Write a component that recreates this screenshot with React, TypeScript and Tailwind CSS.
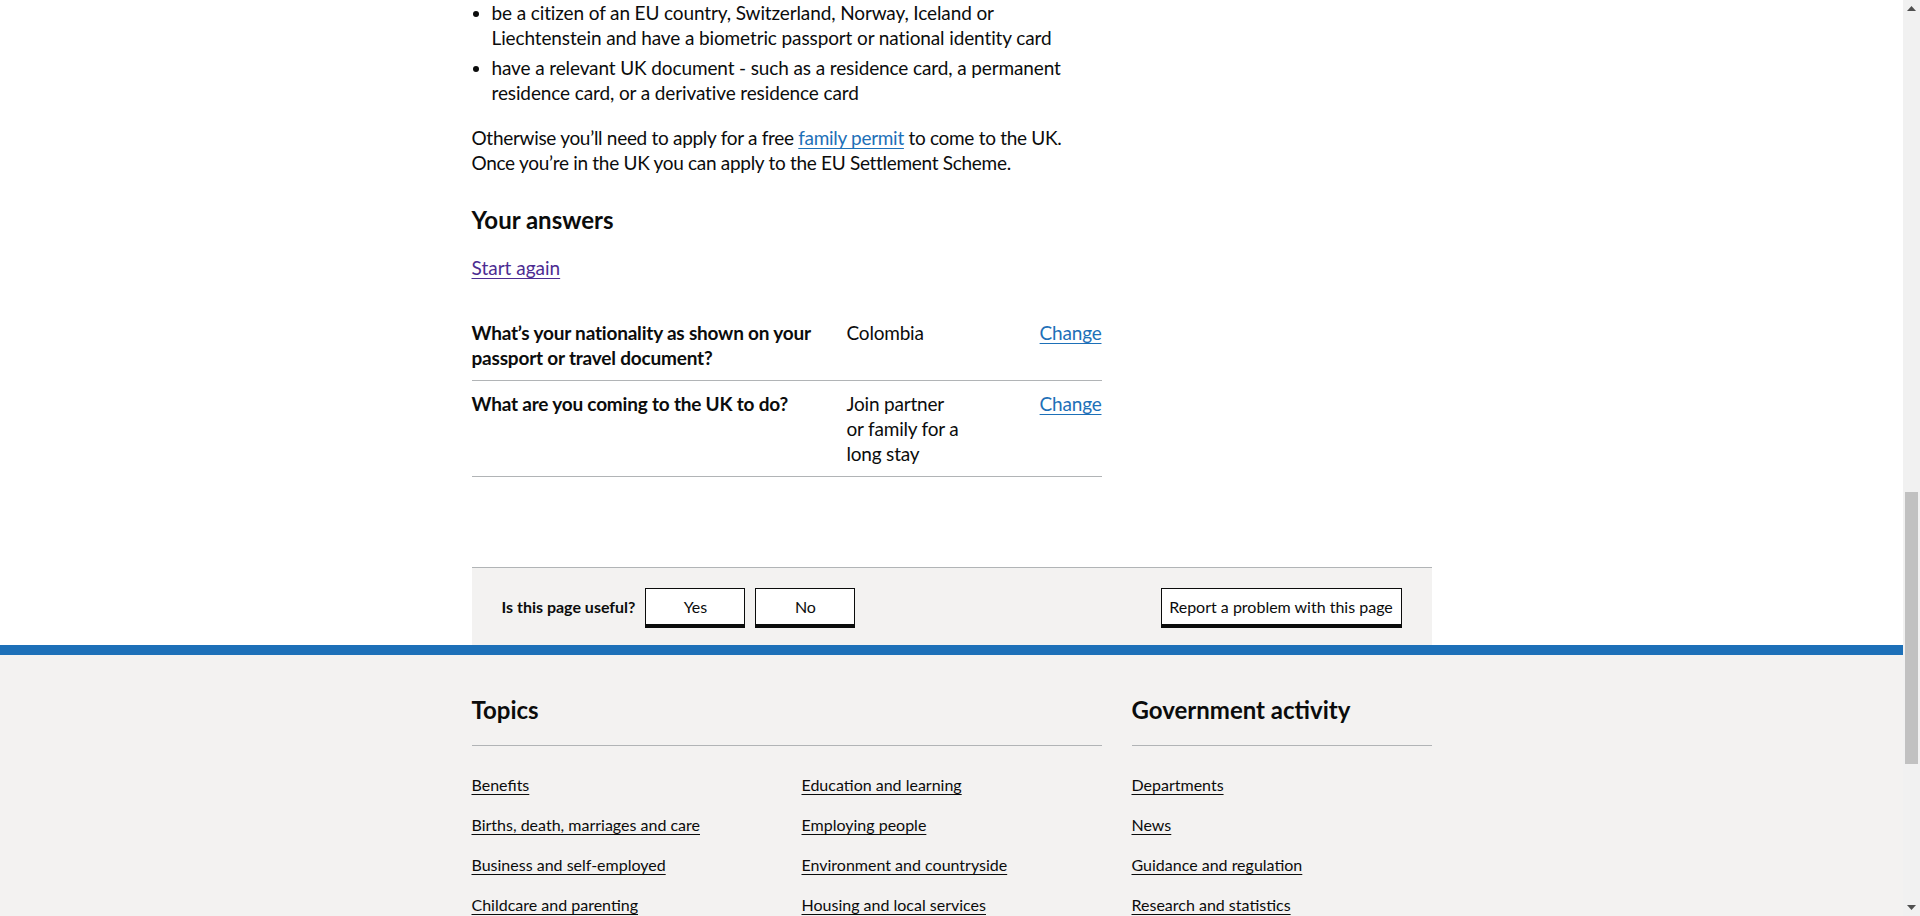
import { ReactNode } from "react";

const font = { fontFamily: "Lato, 'Liberation Sans', sans-serif" };

function TopicLink({ children }: { children: ReactNode }) {
  return (
    <li className="mb-[15px] leading-[25px]">
      <a href="#" className="text-[16px] text-[#0b0c0c] underline decoration-1 underline-offset-[3px]">
        {children}
      </a>
    </li>
  );
}

function FeedbackButton({ text, width }: { text: string; width: string }) {
  return (
    <button
      className={`${width} h-[37px] border border-[#0b0c0c] bg-white text-[16px] text-[#0b0c0c] shadow-[0_3px_0_#0b0c0c]`}
    >
      {text}
    </button>
  );
}

function Scrollbar() {
  return (
    <div className="flex w-[17px] shrink-0 flex-col bg-[#f1f1f1]">
      <div className="flex h-[17px] items-center justify-center">
        <svg width="9" height="5" viewBox="0 0 9 5">
          <path d="M0 5 L4.5 0 L9 5 Z" fill="#505050" />
        </svg>
      </div>
      <div className="flex-1">
        <div className="mx-auto mt-[475px] h-[272px] w-[13px] bg-[#c1c1c1]" />
      </div>
      <div className="flex h-[17px] items-center justify-center">
        <svg width="9" height="5" viewBox="0 0 9 5">
          <path d="M0 0 L9 0 L4.5 5 Z" fill="#505050" />
        </svg>
      </div>
    </div>
  );
}

export default function App() {
  return (
    <div className="flex h-[916px] overflow-hidden bg-white text-[#0b0c0c]" style={font}>
      <div className="flex min-w-0 flex-1 flex-col">
        <main className="mx-auto w-[960px]">
          <div className="w-[630px]">
            <ul className="mb-[20px] list-disc pl-[20px] text-[19px] leading-[25px] tracking-[-0.12px]">
              <li className="mb-[5px]">
                be a citizen of an EU country, Switzerland, Norway, Iceland or Liechtenstein and have a
                biometric passport or national identity card
              </li>
              <li>
                have a relevant UK document - such as a residence card, a permanent residence card, or a
                derivative residence card
              </li>
            </ul>
            <p className="text-[19px] leading-[25px] tracking-[-0.3px]">
              Otherwise you’ll need to apply for a free{" "}
              <a href="#" className="text-[#1d70b8] underline decoration-1 underline-offset-[3px]">
                family permit
              </a>{" "}
              to come to the UK. Once you’re in the UK you can apply to the EU Settlement Scheme.
            </p>
            <h2 className="mt-[30px] text-[24px] font-bold leading-[30px]">Your answers</h2>
            <p className="mt-[20px] text-[19px] leading-[25px]">
              <a href="#" className="text-[#4c2c92] underline decoration-1 underline-offset-[3px]">
                Start again
              </a>
            </p>
            <dl className="mt-[30px] text-[19px] leading-[25px] tracking-[-0.2px]">
              <div className="flex border-b border-[#b1b4b6] py-[10px]">
                <dt className="w-[375px] pr-[20px] font-bold">
                  What’s your nationality as shown on your passport or travel document?
                </dt>
                <dd className="w-[130px] pr-[15px]">Colombia</dd>
                <dd className="flex-1 text-right">
                  <a href="#" className="text-[#1d70b8] underline decoration-1 underline-offset-[3px]">
                    Change
                  </a>
                </dd>
              </div>
              <div className="flex border-b border-[#b1b4b6] py-[10px]">
                <dt className="w-[375px] pr-[20px] font-bold">What are you coming to the UK to do?</dt>
                <dd className="w-[130px] pr-[15px]">Join partner or family for a long stay</dd>
                <dd className="flex-1 text-right">
                  <a href="#" className="text-[#1d70b8] underline decoration-1 underline-offset-[3px]">
                    Change
                  </a>
                </dd>
              </div>
            </dl>
          </div>

          <div className="mt-[90px] flex items-start justify-between border-t border-[#b1b4b6] bg-[#f3f2f1] px-[30px] pb-[20px] pt-[20px]">
            <div className="flex items-center gap-[10px]">
              <span className="text-[16px] font-bold">Is this page useful?</span>
              <FeedbackButton text="Yes" width="w-[100px]" />
              <FeedbackButton text="No" width="w-[100px]" />
            </div>
            <FeedbackButton text="Report a problem with this page" width="w-[241px]" />
          </div>
        </main>

        <div className="h-[10px] shrink-0 bg-[#1d70b8]" />

        <footer className="flex-1 bg-[#f3f2f1]">
          <div className="mx-auto flex w-[960px] gap-[30px] pt-[40px]">
            <div className="w-[630px]">
              <h2 className="border-b border-[#b1b4b6] pb-[20px] text-[24px] font-bold leading-[30px]">Topics</h2>
              <ul className="mt-[26px] grid grid-cols-2 gap-x-[30px]">
                <div>
                  <TopicLink>Benefits</TopicLink>
                  <TopicLink>Births, death, marriages and care</TopicLink>
                  <TopicLink>Business and self-employed</TopicLink>
                  <TopicLink>Childcare and parenting</TopicLink>
                </div>
                <div>
                  <TopicLink>Education and learning</TopicLink>
                  <TopicLink>Employing people</TopicLink>
                  <TopicLink>Environment and countryside</TopicLink>
                  <TopicLink>Housing and local services</TopicLink>
                </div>
              </ul>
            </div>
            <div className="w-[300px]">
              <h2 className="border-b border-[#b1b4b6] pb-[20px] text-[24px] font-bold leading-[30px]">
                Government activity
              </h2>
              <ul className="mt-[26px]">
                <TopicLink>Departments</TopicLink>
                <TopicLink>News</TopicLink>
                <TopicLink>Guidance and regulation</TopicLink>
                <TopicLink>Research and statistics</TopicLink>
              </ul>
            </div>
          </div>
        </footer>
      </div>
      <Scrollbar />
    </div>
  );
}
